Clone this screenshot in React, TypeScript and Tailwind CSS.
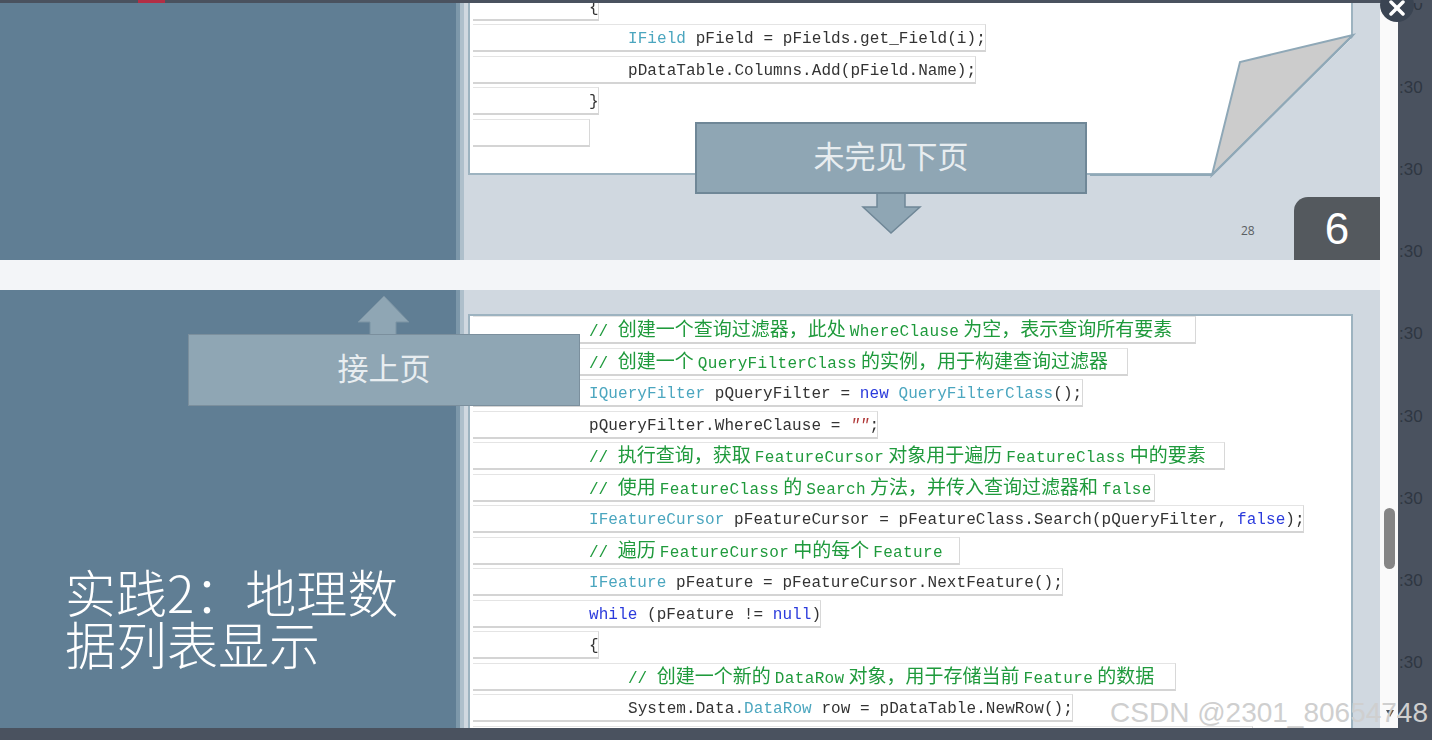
import React from 'react';
import { X } from 'lucide-react';

type Seg = [string, string];

const C = 'text-[#1f9a3c]';
const T = 'text-[#4ba6bf]';
const K = 'text-[#2b3bdc]';
const S = 'text-[#b03838] italic';
const P = 'text-[#333333]';

interface RowData {
  w: string;
  pad: string;
  segs: Seg[];
}

const topRows: RowData[] = [
  { w: 'w-[126px]', pad: 'pl-[116px]', segs: [['{', P]] },
  { w: 'w-[513px]', pad: 'pl-[155px]', segs: [['IField', T], [' pField = pFields.get_Field(i);', P]] },
  { w: 'w-[503px]', pad: 'pl-[155px]', segs: [['pDataTable.Columns.Add(pField.Name);', P]] },
  { w: 'w-[126px]', pad: 'pl-[116px]', segs: [['}', P]] },
  { w: 'w-[116px]', pad: 'pl-[116px]', segs: [] },
];

const bottomRows: RowData[] = [
  { w: 'w-[723px]', pad: 'pl-[116px]', segs: [['// 创建一个查询过滤器，此处 WhereClause 为空，表示查询所有要素', C]] },
  { w: 'w-[655px]', pad: 'pl-[116px]', segs: [['// 创建一个 QueryFilterClass 的实例，用于构建查询过滤器', C]] },
  { w: 'w-[610px]', pad: 'pl-[116px]', segs: [['IQueryFilter', T], [' pQueryFilter = ', P], ['new', K], [' ', P], ['QueryFilterClass', T], ['();', P]] },
  { w: 'w-[405px]', pad: 'pl-[116px]', segs: [['pQueryFilter.WhereClause = ', P], ['""', S], [';', P]] },
  { w: 'w-[752px]', pad: 'pl-[116px]', segs: [['// 执行查询，获取 FeatureCursor 对象用于遍历 FeatureClass 中的要素', C]] },
  { w: 'w-[682px]', pad: 'pl-[116px]', segs: [['// 使用 FeatureClass 的 Search 方法，并传入查询过滤器和 false', C]] },
  { w: 'w-[831px]', pad: 'pl-[116px]', segs: [['IFeatureCursor', T], [' pFeatureCursor = pFeatureClass.Search(pQueryFilter, ', P], ['false', K], [');', P]] },
  { w: 'w-[487px]', pad: 'pl-[116px]', segs: [['// 遍历 FeatureCursor 中的每个 Feature', C]] },
  { w: 'w-[590px]', pad: 'pl-[116px]', segs: [['IFeature', T], [' pFeature = pFeatureCursor.NextFeature();', P]] },
  { w: 'w-[348px]', pad: 'pl-[116px]', segs: [['while', K], [' (pFeature != ', P], ['null', K], [')', P]] },
  { w: 'w-[126px]', pad: 'pl-[116px]', segs: [['{', P]] },
  { w: 'w-[703px]', pad: 'pl-[155px]', segs: [['// 创建一个新的 DataRow 对象，用于存储当前 Feature 的数据', C]] },
  { w: 'w-[600px]', pad: 'pl-[155px]', segs: [['System.Data.', P], ['DataRow', T], [' row = pDataTable.NewRow();', P]] },
  { w: 'w-[780px]', pad: 'pl-[155px]', segs: [] },
];

// latin and chinese have different sizes in the slide, so split the runs
const CodeText = ({ text, color }: { text: string; color: string }) => {
  const parts = text.split(/([\u4e00-\u9fff\uff00-\uffef]+)/);
  if (parts.length === 1) {
    return <span className={`${color} tracking-[0.07px]`}>{text}</span>;
  }
  return (
    <span className={color}>
      {parts.map((p, i) => {
        if (i % 2 === 1) {
          return <span key={i} className="text-[19px] font-['Noto_Sans_CJK_SC',sans-serif]">{p}</span>;
        }
        if (i === 0) return <span key={i}>{p}</span>;
        if (!p) return null;
        return <span key={i} className="mx-[4px] tracking-[0.35px]">{p.trim()}</span>;
      })}
    </span>
  );
};

const CodeRow = ({ row }: { row: RowData }) => {
  const isComment = row.segs.length > 0 && row.segs[0][1] === C;
  return (
    <div className={`${row.w} ${row.pad} ${isComment ? 'pb-[1px]' : 'pt-[3px]'} h-[28px] mb-[3.5px] shrink-0 flex items-center border border-l-0 border-t-[#e4e4e4] border-r-[#d8d8d8] border-b-2 border-b-[#d4d4d4] bg-white whitespace-pre text-[16px] leading-none blur-[0.35px] font-['Liberation_Mono','Noto_Sans_CJK_SC',monospace]`}>
      {row.segs.map(([t, c], i) => (
        <CodeText key={i} text={t} color={c} />
      ))}
    </div>
  );
};

const SidePanel = ({ children }: { children?: React.ReactNode }) => (
  <>
    <div className="w-[456px] shrink-0 bg-[#607e94] relative">{children}</div>
    <div className="w-[4px] shrink-0 bg-[#7d98aa]" />
    <div className="w-[4px] shrink-0 bg-[#aebfcb]" />
  </>
);

export default function App() {
  return (
    <div className="relative w-[1432px] h-[740px] overflow-hidden bg-[#4a525f] font-['Liberation_Sans',sans-serif]">
      <div className="h-[3px] overflow-hidden flex items-end relative">
        <div className="absolute left-[138px] top-0 w-[27px] h-[3px] bg-[#b32e45]" />
      </div>

      <div className="flex h-[725px]">
        <div className="w-[1380px] shrink-0 flex flex-col">
          {/* first slide */}
          <div className="relative h-[257px] shrink-0 flex overflow-hidden">
            <SidePanel />
            <div className="flex-1 bg-[#d0d8e0] pl-[4px]">
              <div className="w-[885px] h-[172px] bg-white border-x-2 border-b-2 border-[#9db3c0] pl-[3px] pb-[23px] flex flex-col justify-end overflow-hidden">
                {topRows.map((r, i) => (
                  <CodeRow key={i} row={r} />
                ))}
              </div>
            </div>

            <svg className="absolute inset-0" width="1380" height="257" viewBox="0 3 1380 257">
              <polygon points="1355,35 1355,180 1212,180 1212,175" fill="#d0d8e0" />
              <polygon points="1353,35 1240,62 1212,175" fill="#cccccc" stroke="#8fa8b7" strokeWidth="2" />
              <polyline points="1353,35 1212,175 1090,175" fill="none" stroke="#8fa8b7" strokeWidth="2" />
              <polygon points="877,193 905,193 905,207 920,207 891,233 863,207 877,207" fill="#8fa6b4" stroke="#6f8797" strokeWidth="1.5" />
            </svg>

            <div className="absolute left-[695px] top-[119px] w-[392px] h-[72px] pb-[6px] bg-[#8fa6b4] border-2 border-[#6f8797] flex items-center justify-center text-[31px] text-[#e8edf0] font-['Noto_Sans_CJK_SC',sans-serif]">
              未完见下页
            </div>

            <span className="absolute left-[1241px] top-[219px] text-[12px] text-[#5a5f63] font-['Open_Sans',sans-serif]">28</span>

            <div className="absolute right-0 bottom-0 w-[86px] h-[63px] bg-[#54595e] rounded-tl-[14px] flex items-center justify-center text-[44px] text-white">
              6
            </div>
          </div>

          <div className="h-[30px] shrink-0 bg-[#f3f5f8]" />

          {/* second slide */}
          <div className="relative flex-1 flex overflow-hidden">
            <SidePanel>
              <div className="absolute left-[65px] top-[275px] text-[51px] leading-[52px] font-light text-white font-['Noto_Sans_CJK_SC',sans-serif] blur-[0.3px]">
                实践2：地理数
                <br />
                据列表显示
              </div>
            </SidePanel>
            <div className="flex-1 bg-[#d0d8e0] pl-[4px] pt-[25px]">
              <div className="w-[885px] h-[440px] bg-white border-x-2 border-t-2 border-[#9db3c0] pl-[3px] -mt-[1px] flex flex-col overflow-hidden">
                {bottomRows.map((r, i) => (
                  <CodeRow key={i} row={r} />
                ))}
              </div>
            </div>

            <svg className="absolute inset-0" width="1380" height="438" viewBox="0 290 1380 438">
              <polygon points="384,296 409,322 396,322 396,336 370,336 370,322 358,322" fill="#8fa6b4" stroke="#7b93a3" strokeWidth="1" />
            </svg>

            <div className="absolute left-[188px] top-[44px] w-[392px] h-[72px] pb-[6px] bg-[#8fa6b4] border border-[#7b8f9d] flex items-center justify-center text-[31px] text-[#e8edf0] font-['Noto_Sans_CJK_SC',sans-serif]">
              接上页
            </div>
          </div>
        </div>

        {/* scrollbar */}
        <div className="relative w-[18px] shrink-0 bg-[#fafafa]">
          <div className="absolute left-[4px] top-[505px] w-[11px] h-[61px] rounded-full bg-[#858585]" />
          <svg className="absolute left-[6px] top-[707px]" width="8" height="7" viewBox="0 0 8 7">
            <polygon points="0,0 8,0 4,7" fill="#555555" />
          </svg>
        </div>

        {/* time rail of the page behind the viewer */}
        <div className="flex-1 overflow-hidden">
          <div className="-mt-[39px] flex flex-col pl-[1px] text-[17px] text-[#2f3742]">
            {[0, 1, 2, 3, 4, 5, 6, 7, 8].map((i) => (
              <div key={i} className="h-[82.25px] shrink-0 flex items-center">:30</div>
            ))}
          </div>
        </div>
      </div>

      <div className="absolute left-[1380px] top-[-12px] w-[34px] h-[34px] rounded-full bg-[#3a4452] flex items-center justify-center text-white">
        <X className="w-[24px] h-[24px] mt-[6px]" strokeWidth={3.5} />
      </div>

      <div className="absolute right-[4px] top-[695px] text-[28px] leading-[36px] text-[#cfcfcf] whitespace-nowrap">
        CSDN @2301_80654748
      </div>
    </div>
  );
}
